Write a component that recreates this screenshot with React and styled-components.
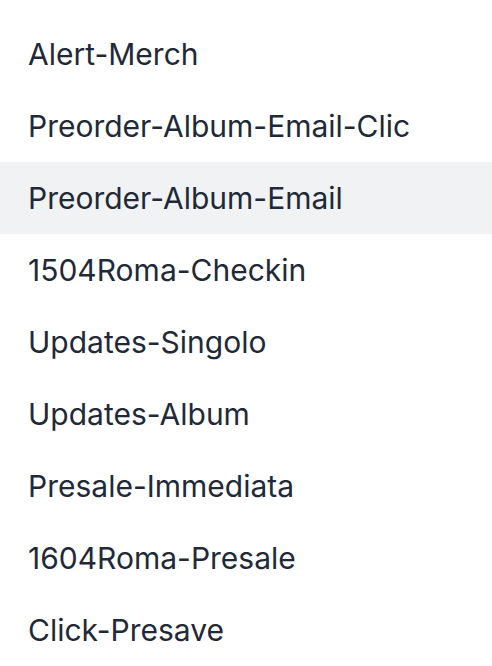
import React from "react";
import styled, { createGlobalStyle } from "styled-components";

const Global = createGlobalStyle`
  html, body { margin: 0; padding: 0; background: #ffffff; }
  body { font-family: Inter, "Noto Sans", sans-serif; }
`;

const List = styled.ul`
  list-style: none;
  margin: 0;
  padding: 18px 0 0;
  width: 492px;
`;

const Item = styled.li`
  height: 72px;
  display: flex;
  align-items: center;
  padding: 0 28px;
  font-size: 30px;
  color: #1f2937;
  background: ${(p) => (p.$active ? "#f1f2f4" : "transparent")};
  white-space: nowrap;
  overflow: hidden;
`;

const items = [
  "Alert-Merch",
  "Preorder-Album-Email-Clic",
  "Preorder-Album-Email",
  "1504Roma-Checkin",
  "Updates-Singolo",
  "Updates-Album",
  "Presale-Immediata",
  "1604Roma-Presale",
  "Click-Presave",
];

export default function App() {
  return (
    <>
      <Global />
      <List>
        {items.map((t, i) => (
          <Item key={t} $active={i === 2}>
            {t}
          </Item>
        ))}
      </List>
    </>
  );
}
